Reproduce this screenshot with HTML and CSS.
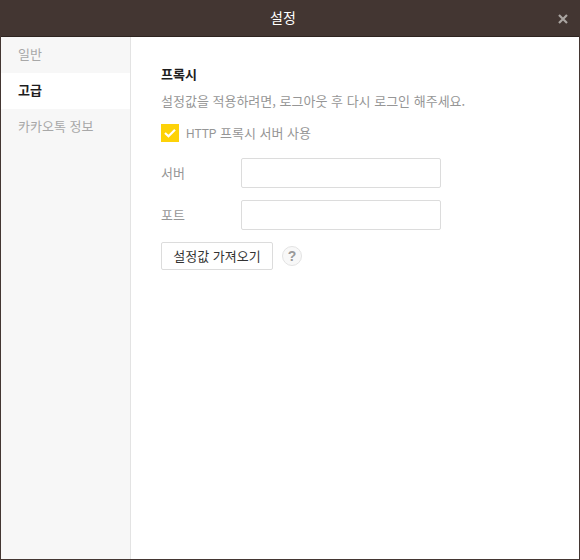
FILE: index.html
```html
<!DOCTYPE html>
<html lang="ko">
<head>
<meta charset="utf-8">
<title>설정</title>
<link rel="stylesheet" href="styles.css">
</head>
<body>
<div class="window">
  <header class="titlebar">
    <span class="title">설정</span>
    <svg class="close" width="10" height="10" viewBox="0 0 10 10"><path d="M1 1L9 9M9 1L1 9" stroke="#aaa5a1" stroke-width="2.2" fill="none"/></svg>
  </header>
  <div class="body">
    <nav class="sidebar">
      <div class="nav-item">일반</div>
      <div class="nav-item active">고급</div>
      <div class="nav-item">카카오톡 정보</div>
    </nav>
    <main class="content">
      <h2 class="heading">프록시</h2>
      <p class="desc">설정값을 적용하려면, 로그아웃 후 다시 로그인 해주세요.</p>
      <div class="check-row">
        <span class="checkbox"><svg width="18" height="18" viewBox="0 0 18 18"><path d="M4 9L7.5 12.3L14 5.8" stroke="#fff" stroke-width="2.2" fill="none"/></svg></span>
        <span class="check-label"><span class="latin">HTTP</span> 프록시 서버 사용</span>
      </div>
      <div class="field"><span class="field-label">서버</span><input class="input" type="text"></div>
      <div class="field"><span class="field-label">포트</span><input class="input" type="text"></div>
      <div class="actions">
        <button class="btn">설정값 가져오기</button>
        <span class="help">?</span>
      </div>
    </main>
  </div>
</div>
</body>
</html>
```
FILE: styles.css
```css
* { box-sizing: border-box; }
html, body { margin: 0; height: 100%; }
body { font-family: "Noto Sans CJK KR", "Liberation Sans", sans-serif; font-size: 13px; background: #fff; overflow: hidden; }
.window { width: 580px; height: 560px; display: flex; flex-direction: column; border: 1px solid #433632; border-top: 0; }
.titlebar { height: 37px; flex: none; background: #433632; border-bottom: 1px solid #2e2420; display: flex; align-items: center; justify-content: center; position: relative; padding: 0 14px 2px 0; }
.title { color: #fff; font-size: 14px; }
.close { position: absolute; right: 11px; top: 14px; }
.body { flex: 1; display: flex; min-height: 0; }
.sidebar { width: 130px; flex: none; background: #f7f7f7; border-right: 1px solid #e3e3e3; }
.nav-item { height: 36px; line-height: 34px; padding-left: 17px; color: #a8a8a8; }
.nav-item.active { background: #fff; color: #1e1e1e; font-weight: 700; }
.content { flex: 1; padding: 28px 30px 0; }
.heading { margin: 0; font-size: 13px; font-weight: 700; color: #1e1e1e; line-height: 18px; }
.desc { margin: 9px 0 0; color: #969696; line-height: 18px; }
.check-row { display: flex; align-items: center; gap: 7px; margin-top: 14px; height: 18px; }
.checkbox { width: 18px; height: 18px; background: #fdd208; display: block; }
.checkbox svg { display: block; }
.check-label { color: #969696; padding-bottom: 2px; }
.latin { font-family: "Roboto", sans-serif; font-size: 12px; }
.field { display: flex; align-items: center; margin-top: 12px; }
.check-row + .field { margin-top: 16px; }
.field-label { width: 80px; color: #969696; padding-bottom: 2px; }
.input { width: 200px; height: 30px; border: 1px solid #dcdcdc; border-radius: 2px; background: #fff; outline: none; padding: 0 8px; }
.actions { display: flex; align-items: center; gap: 9px; margin-top: 12px; }
.btn { width: 112px; height: 28px; padding: 0 0 2px; border: 1px solid #dcdcdc; border-radius: 2px; background: #fff; color: #333; font: inherit; }
.help { width: 20px; height: 20px; border-radius: 50%; border: 1px solid #e3e3e3; background: #f8f8f8; color: #9a9a9a; font: 700 14px/19px "Liberation Sans", sans-serif; text-align: center; }
```
